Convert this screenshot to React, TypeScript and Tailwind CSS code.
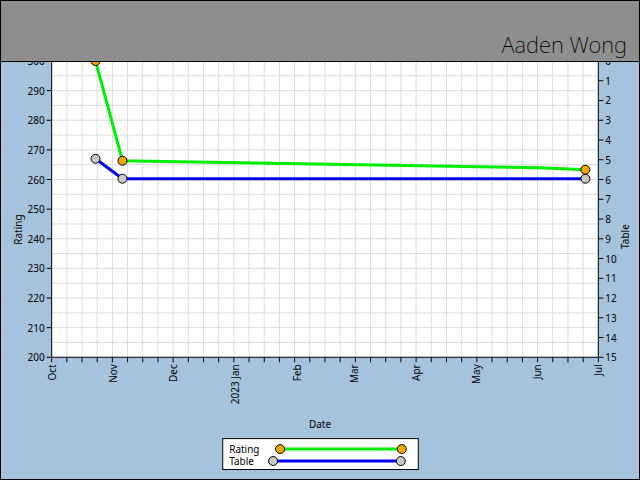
export default function App() {
  const L = 51, R = 599, T = 61, B = 358;
  const vx = Array.from({ length: 37 }, (_, i) => L + (i * (R - L)) / 36);
  const hy = Array.from({ length: 21 }, (_, i) => T + (i * (B - T)) / 20);
  const months: [string, number][] = [["Oct", 51], ["Nov", 113], ["Dec", 173], ["2023 Jan", 235], ["Feb", 297], ["Mar", 354], ["Apr", 416], ["May", 476], ["Jun", 538], ["Jul", 599]];
  const green = "51,161 122,161 122,161 180,162 180,162 240,163 240,163 300,164 300,164 360,165 360,165 420,166 420,166 480,167 480,167 540,168 540,168 586,170";
  const greenPts = green.split(" ").slice(2).join(" ");
  return (
    <div className="w-[640px] h-[480px] border border-black bg-[#a6c3dd] flex flex-col overflow-hidden">
      <div className="h-[61px] shrink-0 bg-[#8e8e8e] border-b border-black flex items-end justify-end pr-3 pb-[6px]">
        <span className="text-[22px] text-black leading-none font-['DejaVu_Sans',sans-serif] font-extralight">Aaden Wong</span>
      </div>
      <svg width="638" height="418" viewBox="1 62 638 418" className="block font-['DejaVu_Serif',serif] text-[10px]">
        <rect x={L} y={T} width={R - L} height={B - T} fill="#fff" />
        {vx.map((x, i) => <line key={"v" + i} x1={x} x2={x} y1={T} y2={B} stroke="#dcdcdc" />)}
        {hy.map((y, i) => <line key={"h" + i} x1={L} x2={R} y1={y} y2={y} stroke="#dcdcdc" />)}
        <line x1={L} x2={L} y1={T} y2={B} stroke="#000" />
        <line x1={R} x2={R} y1={T} y2={B} stroke="#000" />
        <line x1={L} x2={R} y1={B} y2={B} stroke="#000" />
        {vx.map((x, i) => <line key={"t" + i} x1={x} x2={x} y1={B} y2={B + 5} stroke="#000" />)}
        {Array.from({ length: 11 }, (_, i) => {
          const y = T + (i * (B - T)) / 10;
          return (
            <g key={"l" + i}>
              <line x1={L - 5} x2={L} y1={y} y2={y} stroke="#000" />
              <text x={L - 7} y={y + 4} textAnchor="end">{300 - i * 10}</text>
            </g>
          );
        })}
        {Array.from({ length: 16 }, (_, i) => {
          const y = T + (i * (B - T)) / 15;
          return (
            <g key={"r" + i}>
              <line x1={R} x2={R + 5} y1={y} y2={y} stroke="#000" />
              <text x={R + 7} y={y + 4}>{i}</text>
            </g>
          );
        })}
        {months.map(([m, x]) => (
          <text key={m} transform={`translate(${x + 4},${B + 7}) rotate(-90)`} textAnchor="end">{m}</text>
        ))}
        <text transform="translate(21,230) rotate(-90)" textAnchor="middle">Rating</text>
        <text transform="translate(630,237) rotate(-90)" textAnchor="middle">Table</text>
        <text x={320} y={429} textAnchor="middle">Date</text>
        <polyline points="95,159 122,179 586,179" fill="none" stroke="#0000ee" strokeWidth={3} />
        <polyline points={"95,61 " + greenPts} fill="none" stroke="#00ee00" strokeWidth={3} />
        {[[95, 159], [122, 179], [586, 179]].map(([x, y], i) => <circle key={"b" + i} cx={x} cy={y} r={4.5} fill="#c8c8c8" stroke="#000" />)}
        {[[95, 61], [122, 161], [586, 170]].map(([x, y], i) => <circle key={"g" + i} cx={x} cy={y} r={4.5} fill="#f5a700" stroke="#000" />)}
        <rect x={222.5} y={439.5} width={196} height={31} fill="#fff" stroke="#000" />
        <text x={229} y={454}>Rating</text>
        <text x={229} y={466}>Table</text>
        <line x1={280} x2={402} y1={450} y2={450} stroke="#00ee00" strokeWidth={3} />
        <line x1={273} x2={401} y1={462} y2={462} stroke="#0000ee" strokeWidth={3} />
        <circle cx={280} cy={450} r={4.5} fill="#f5a700" stroke="#000" />
        <circle cx={402} cy={450} r={4.5} fill="#f5a700" stroke="#000" />
        <circle cx={273} cy={462} r={4.5} fill="#c8c8c8" stroke="#000" />
        <circle cx={401} cy={462} r={4.5} fill="#c8c8c8" stroke="#000" />
      </svg>
    </div>
  );
}
